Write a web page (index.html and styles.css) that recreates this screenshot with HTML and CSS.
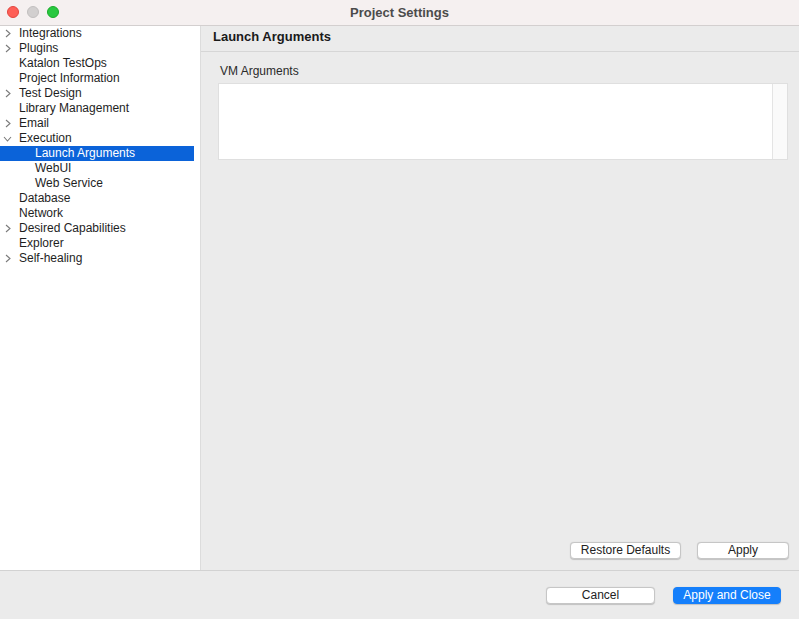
FILE: index.html
```html
<!DOCTYPE html>
<html>
<head>
<meta charset="utf-8">
<link rel="stylesheet" href="styles.css">
</head>
<body>
<div class="window">
  <div class="titlebar">
    <div class="lights">
      <span class="light red"></span>
      <span class="light gray"></span>
      <span class="light green"></span>
    </div>
    <div class="title">Project Settings</div>
  </div>
  <div class="main">
    <div class="sidebar">
      <div class="row"><svg class="chev" viewBox="0 0 6 9"><polyline points="1,1 5,4.5 1,8"/></svg><span>Integrations</span></div>
      <div class="row"><svg class="chev" viewBox="0 0 6 9"><polyline points="1,1 5,4.5 1,8"/></svg><span>Plugins</span></div>
      <div class="row"><span class="nochev"></span><span>Katalon TestOps</span></div>
      <div class="row"><span class="nochev"></span><span>Project Information</span></div>
      <div class="row"><svg class="chev" viewBox="0 0 6 9"><polyline points="1,1 5,4.5 1,8"/></svg><span>Test Design</span></div>
      <div class="row"><span class="nochev"></span><span>Library Management</span></div>
      <div class="row"><svg class="chev" viewBox="0 0 6 9"><polyline points="1,1 5,4.5 1,8"/></svg><span>Email</span></div>
      <div class="row"><svg class="chev down" viewBox="0 0 9 6"><polyline points="1,1 4.5,5 8,1"/></svg><span>Execution</span></div>
      <div class="row child selected"><span>Launch Arguments</span></div>
      <div class="row child"><span>WebUI</span></div>
      <div class="row child"><span>Web Service</span></div>
      <div class="row"><span class="nochev"></span><span>Database</span></div>
      <div class="row"><span class="nochev"></span><span>Network</span></div>
      <div class="row"><svg class="chev" viewBox="0 0 6 9"><polyline points="1,1 5,4.5 1,8"/></svg><span>Desired Capabilities</span></div>
      <div class="row"><span class="nochev"></span><span>Explorer</span></div>
      <div class="row"><svg class="chev" viewBox="0 0 6 9"><polyline points="1,1 5,4.5 1,8"/></svg><span>Self-healing</span></div>
    </div>
    <div class="content">
      <div class="content-header">Launch Arguments</div>
      <div class="content-body">
        <div class="label">VM Arguments</div>
        <div class="textbox">
          <div class="textarea"></div>
          <div class="vscroll"></div>
        </div>
      </div>
      <div class="content-actions">
        <button class="btn btn-restore">Restore Defaults</button>
        <button class="btn btn-apply">Apply</button>
      </div>
    </div>
  </div>
  <div class="footer">
    <button class="btn btn-cancel">Cancel</button>
    <button class="btn btn-primary">Apply and Close</button>
  </div>
</div>
</body>
</html>
```
FILE: styles.css
```css
* { box-sizing: border-box; }
html, body { margin: 0; padding: 0; }
body {
  width: 799px;
  height: 619px;
  overflow: hidden;
  font-family: "Liberation Sans", Arial, sans-serif;
  font-size: 12px;
  color: #1f1f1f;
  background: #ebebeb;
}
.window {
  width: 799px;
  height: 619px;
  display: flex;
  flex-direction: column;
}
.titlebar {
  height: 26px;
  flex: 0 0 26px;
  background: #f5f0f0;
  border-bottom: 1px solid #d3cfcf;
  display: flex;
  align-items: center;
  position: relative;
}
.lights {
  display: flex;
  gap: 8px;
  padding-left: 7px;
  position: absolute;
  left: 0;
  top: 6px;
}
.light {
  width: 12px;
  height: 12px;
  border-radius: 50%;
  display: block;
}
.light.red { background: #fe5f57; border: 0.5px solid #e2463f; }
.light.gray { background: #d2cfcf; border: 0.5px solid #c2bfbf; }
.light.green { background: #28c840; border: 0.5px solid #1aab29; }
.title {
  flex: 1;
  text-align: center;
  font-weight: bold;
  font-size: 13px;
  color: #4b4b4b;
}
.main {
  flex: 1;
  display: flex;
  min-height: 0;
  border-bottom: 1px solid #d2d2d2;
}
.sidebar {
  width: 201px;
  flex: 0 0 201px;
  background: #ffffff;
  border-right: 1px solid #dcdcdc;
  padding-right: 6px;
}
.row {
  height: 15px;
  line-height: 15px;
  display: flex;
  align-items: center;
  white-space: nowrap;
  color: #1e1e1e;
}
.chev {
  width: 6px;
  height: 9px;
  margin-left: 5px;
  margin-right: 8px;
  fill: none;
  stroke: #7a7a7a;
  stroke-width: 1.1;
}
.chev.down {
  width: 9px;
  height: 6px;
  margin-left: 3px;
  margin-right: 7px;
}
.nochev {
  width: 19px;
  flex: 0 0 19px;
}
.row.child { padding-left: 35px; }
.row.selected {
  background: #0b63d9;
  color: #ffffff;
}
.content {
  flex: 1;
  display: flex;
  flex-direction: column;
  background: #ebebeb;
}
.content-header {
  height: 26px;
  flex: 0 0 26px;
  border-bottom: 1px solid #d6d6d6;
  padding-left: 12px;
  font-weight: bold;
  font-size: 13px;
  line-height: 22px;
  color: #1a1a1a;
}
.content-body {
  flex: 1;
  padding: 12px 11px 0 17px;
}
.label {
  padding-left: 2px;
  height: 14px;
  line-height: 14px;
  color: #2a2a2a;
  margin-bottom: 5px;
}
.textbox {
  height: 77px;
  display: flex;
  border: 1px solid #dfdfdf;
  background: #ffffff;
}
.textarea { flex: 1; background: #ffffff; }
.vscroll {
  width: 15px;
  flex: 0 0 15px;
  background: #fafafa;
  border-left: 1px solid #e4e4e4;
}
.content-actions {
  display: flex;
  justify-content: flex-end;
  gap: 16px;
  padding: 0 10px 11px 0;
}
.btn {
  font-family: "Liberation Sans", Arial, sans-serif;
  font-size: 12px;
  height: 17px;
  padding: 0;
  line-height: 15px;
  background: #ffffff;
  color: #222222;
  border: 0.5px solid #c6c6c6;
  border-radius: 4px;
  box-shadow: 0 0.5px 1px rgba(0,0,0,0.18);
}
.btn-restore { width: 111px; }
.btn-apply { width: 92px; }
.footer {
  height: 48px;
  flex: 0 0 48px;
  display: flex;
  justify-content: flex-end;
  align-items: center;
  gap: 18px;
  padding-right: 18px;
  background: #ebebeb;
}
.btn-cancel { width: 109px; }
.btn-primary {
  width: 108px;
  background: #157ffb;
  color: #ffffff;
  border-color: #157ffb;
}
```
